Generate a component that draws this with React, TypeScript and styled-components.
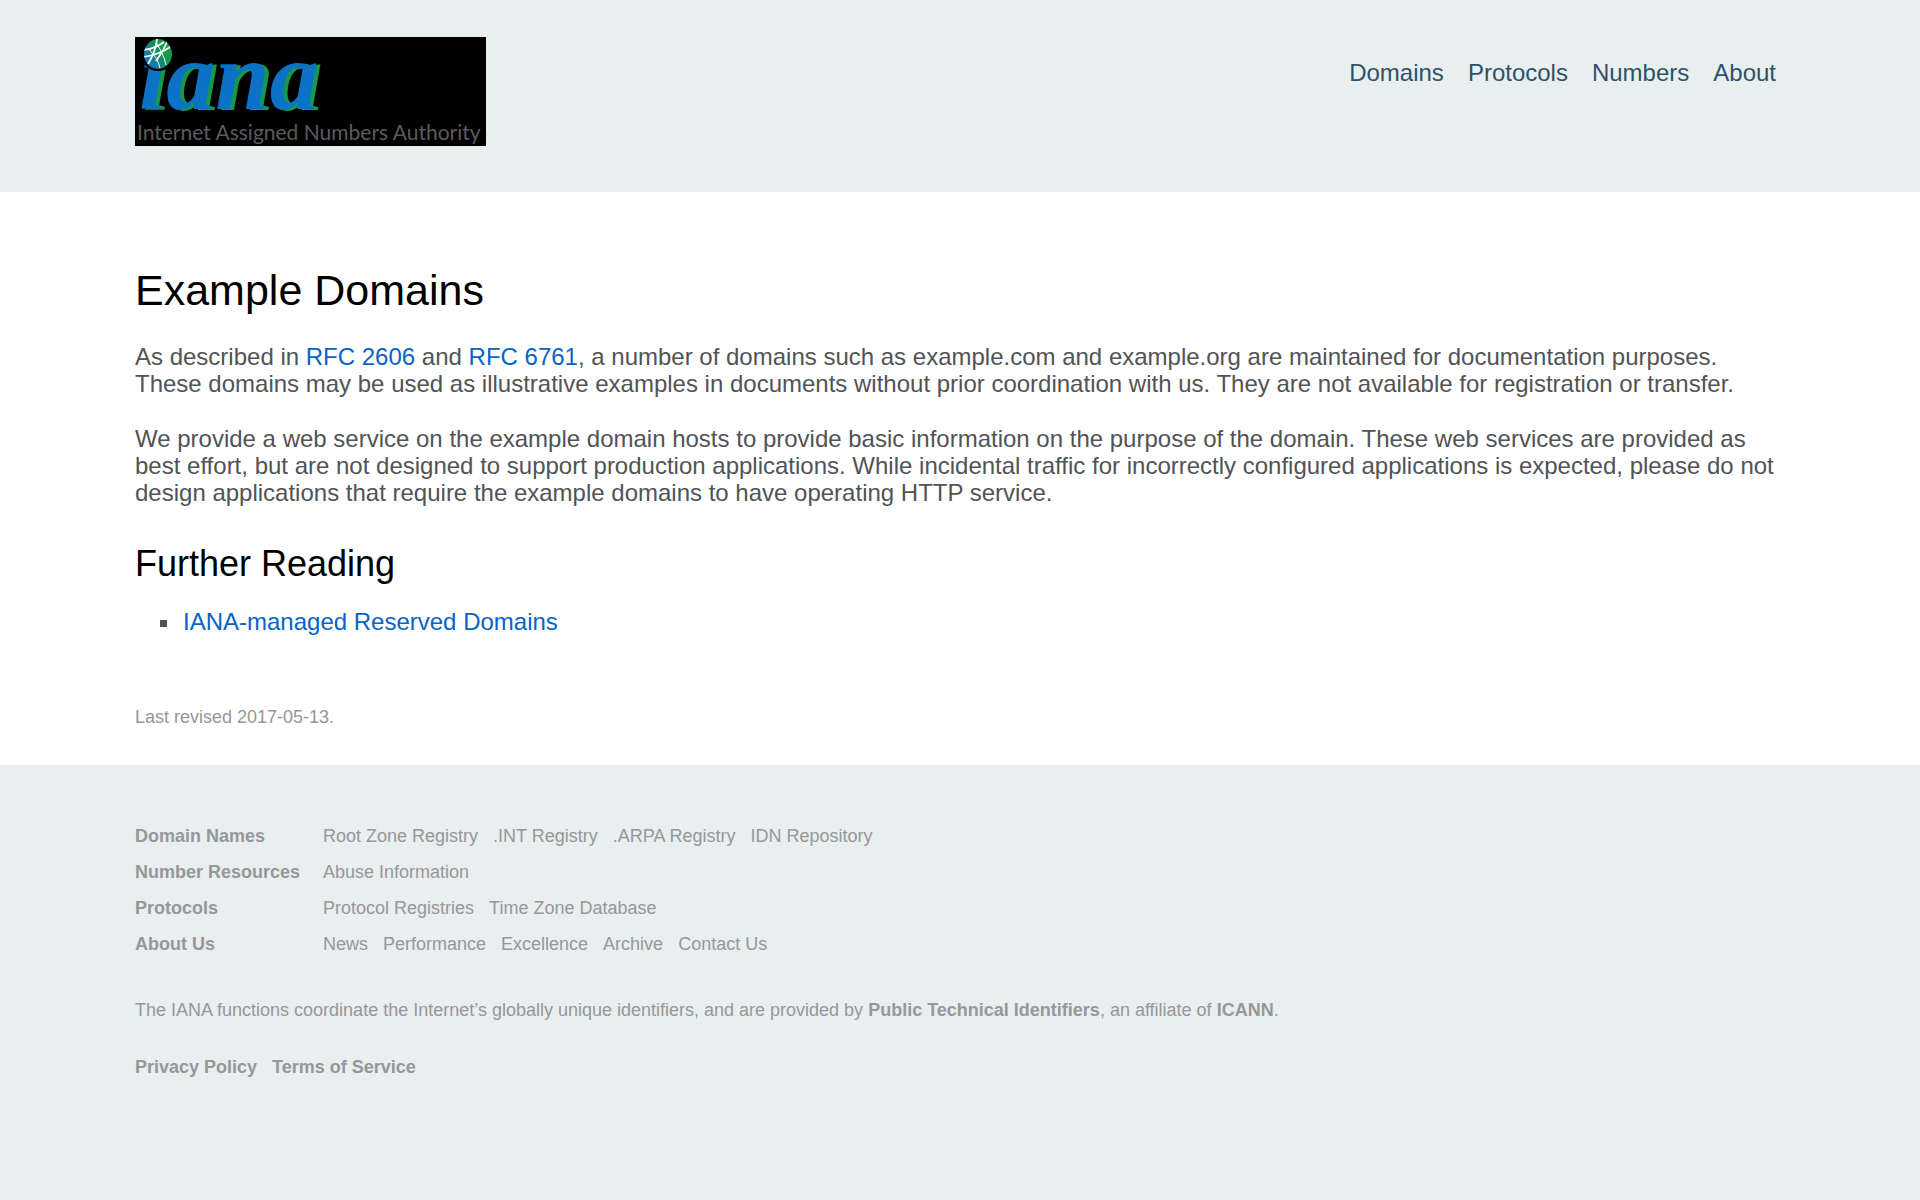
import React from "react";
import styled, { createGlobalStyle } from "styled-components";

const GlobalStyle = createGlobalStyle`
  body {
    margin: 0;
    background: #e9eeee;
    color: #525355;
    font-family: "Liberation Sans", Arial, Helvetica, sans-serif;
    font-size: 24px;
    line-height: 27px;
  }
`;

const Container = styled.div`
  box-sizing: border-box;
  max-width: 1650px;
  margin: 0 auto;
`;

const Header = styled.header`
  padding: 37px 24px 46px;
`;

const HeaderRow = styled(Container)`
  display: flex;
  justify-content: space-between;
  align-items: flex-start;
`;

const LogoLink = styled.a`
  display: block;
  line-height: 0;
`;

const Wordmark = styled.text`
  font-family: "Liberation Serif", "Times New Roman", serif;
  font-size: 98px;
  font-weight: 700;
  font-style: italic;
  fill: #0b72c6;
  filter: drop-shadow(4px 1px 0 #17994b);
`;

const Tagline = styled.text`
  font-family: Lato, sans-serif;
  font-size: 21px;
  fill: #5b5b5d;
`;

const NavList = styled.ul`
  display: flex;
  gap: 24px;
  margin: 0;
  padding: 22px 9px 0 0;
  list-style: none;
`;

const NavLink = styled.a`
  color: #2d526b;
  text-decoration: none;
`;

const Main = styled.main`
  padding: 74px 24px 38px;
  background: #fff;
`;

const Title = styled.h1`
  margin: 0 0 29px;
  color: #000;
  font-size: 43px;
  line-height: 48px;
  font-weight: 400;
`;

const Subtitle = styled.h2`
  margin: 37px 0 23px;
  color: #000;
  font-size: 36px;
  line-height: 42px;
  font-weight: 400;
`;

const Paragraph = styled.p`
  margin: 0 0 28px;
`;

const TextLink = styled.a`
  color: #0863c8;
  text-decoration: none;
`;

const ReadingList = styled.ul`
  margin: 0;
  padding-left: 46px;
  list-style: square;
`;

const ReadingItem = styled.li`
  padding-left: 2px;
`;

const Revised = styled.p`
  margin: 72px 0 0;
  color: #969696;
  font-size: 18px;
  line-height: 20px;
`;

const Footer = styled.footer`
  padding: 53px 24px 52px;
  border-bottom: 1px solid #eff2f2;
  color: #96979b;
  font-size: 18px;
  line-height: 20px;
`;

const FooterTable = styled.table`
  border-collapse: collapse;
  font-size: 18px;
  line-height: 20px;
`;

const GroupCell = styled.th`
  width: 188px;
  padding: 8px 0;
  text-align: left;
  white-space: nowrap;
`;

const LinksCell = styled.td`
  padding: 8px 0;
`;

const LinkRow = styled.ul`
  display: flex;
  flex-wrap: wrap;
  gap: 15px;
  margin: 0;
  padding: 0;
  list-style: none;
`;

const FooterLink = styled.a<{ $strong?: boolean }>`
  color: inherit;
  font-weight: ${(p) => (p.$strong ? 700 : "inherit")};
  text-decoration: none;
`;

const Custodian = styled.p`
  margin: 38px 0 37px;
`;

const navItems = ["Domains", "Protocols", "Numbers", "About"];

const footerGroups = [
  { name: "Domain Names", links: ["Root Zone Registry", ".INT Registry", ".ARPA Registry", "IDN Repository"] },
  { name: "Number Resources", links: ["Abuse Information"] },
  { name: "Protocols", links: ["Protocol Registries", "Time Zone Database"] },
  { name: "About Us", links: ["News", "Performance", "Excellence", "Archive", "Contact Us"] },
];

function Logo() {
  return (
    <svg width="351" height="109" viewBox="0 0 351 109" role="img" aria-label="Homepage">
      <defs>
        <linearGradient id="globe" x1="0" y1="0.9" x2="0.9" y2="0.3">
          <stop offset="0.2" stopColor="#1677c2" />
          <stop offset="0.55" stopColor="#17886f" />
          <stop offset="0.8" stopColor="#149a4a" />
        </linearGradient>
        <clipPath id="disc">
          <ellipse cx="23" cy="17" rx="14" ry="15" />
        </clipPath>
      </defs>
      <rect width="351" height="109" fill="#000" />
      <Wordmark x="4" y="72">iana</Wordmark>
      <circle cx="23" cy="17" r="17" fill="#000" />
      <g clipPath="url(#disc)">
        <rect x="8" y="1" width="30" height="32" fill="url(#globe)" />
        <g fill="none" stroke="#f4fbf8" strokeWidth="1.8">
          <path d="M8 13Q20 12 29 5" />
          <path d="M8 20Q24 18 35 10" />
          <path d="M22 2Q21 14 13 27" />
          <path d="M32 5Q28 15 21 24" />
          <path d="M21 5L26 14Q30 22 31 28" strokeWidth="1" />
          <path d="M13 11L21 21Q24 26 25 31" strokeWidth="1" />
        </g>
      </g>
      <Tagline x="2" y="103">Internet Assigned Numbers Authority</Tagline>
    </svg>
  );
}

export default function App() {
  return (
    <>
      <GlobalStyle />
      <Header>
        <HeaderRow>
          <LogoLink href="#">
            <Logo />
          </LogoLink>
          <nav>
            <NavList>
              {navItems.map((item) => (
                <li key={item}>
                  <NavLink href="#">{item}</NavLink>
                </li>
              ))}
            </NavList>
          </nav>
        </HeaderRow>
      </Header>
      <Main>
        <Container>
          <Title>Example Domains</Title>
          <Paragraph>
            As described in <TextLink href="#">RFC 2606</TextLink> and <TextLink href="#">RFC 6761</TextLink>, a
            number of domains such as example.com and example.org are maintained for documentation purposes. These
            domains may be used as illustrative examples in documents without prior coordination with us. They are
            not available for registration or transfer.
          </Paragraph>
          <Paragraph>
            We provide a web service on the example domain hosts to provide basic information on the purpose of the
            domain. These web services are provided as best effort, but are not designed to support production
            applications. While incidental traffic for incorrectly configured applications is expected, please do
            not design applications that require the example domains to have operating HTTP service.
          </Paragraph>
          <Subtitle>Further Reading</Subtitle>
          <ReadingList>
            <ReadingItem>
              <TextLink href="#">IANA-managed Reserved Domains</TextLink>
            </ReadingItem>
          </ReadingList>
          <Revised>Last revised 2017-05-13.</Revised>
        </Container>
      </Main>
      <Footer>
        <Container>
          <FooterTable>
            <tbody>
              {footerGroups.map((group) => (
                <tr key={group.name}>
                  <GroupCell scope="row">
                    <FooterLink href="#">{group.name}</FooterLink>
                  </GroupCell>
                  <LinksCell>
                    <LinkRow>
                      {group.links.map((link) => (
                        <li key={link}>
                          <FooterLink href="#">{link}</FooterLink>
                        </li>
                      ))}
                    </LinkRow>
                  </LinksCell>
                </tr>
              ))}
            </tbody>
          </FooterTable>
          <Custodian>
            The IANA functions coordinate the Internet’s globally unique identifiers, and are provided by{" "}
            <FooterLink href="#" $strong>
              Public Technical Identifiers
            </FooterLink>
            , an affiliate of{" "}
            <FooterLink href="#" $strong>
              ICANN
            </FooterLink>
            .
          </Custodian>
          <LinkRow>
            <li>
              <FooterLink href="#" $strong>
                Privacy Policy
              </FooterLink>
            </li>
            <li>
              <FooterLink href="#" $strong>
                Terms of Service
              </FooterLink>
            </li>
          </LinkRow>
        </Container>
      </Footer>
    </>
  );
}
